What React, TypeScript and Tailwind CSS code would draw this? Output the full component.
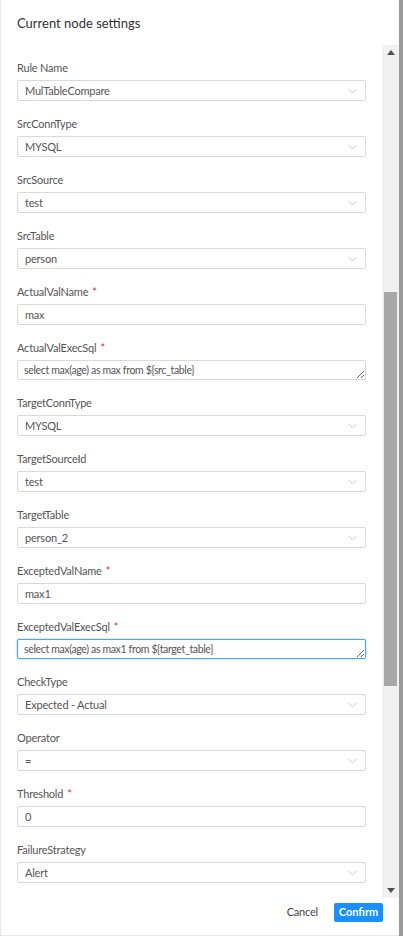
const fields = [
  { label: "Rule Name", value: "MulTableCompare", kind: "select" },
  { label: "SrcConnType", value: "MYSQL", kind: "select" },
  { label: "SrcSource", value: "test", kind: "select" },
  { label: "SrcTable", value: "person", kind: "select" },
  { label: "ActualValName", value: "max", kind: "input", required: true },
  { label: "ActualValExecSql", value: "select max(age) as max from ${src_table}", kind: "textarea", required: true },
  { label: "TargetConnType", value: "MYSQL", kind: "select" },
  { label: "TargetSourceId", value: "test", kind: "select" },
  { label: "TargetTable", value: "person_2", kind: "select" },
  { label: "ExceptedValName", value: "max1", kind: "input", required: true },
  { label: "ExceptedValExecSql", value: "select max(age) as max1 from ${target_table}", kind: "textarea", required: true, focused: true },
  { label: "CheckType", value: "Expected - Actual", kind: "select" },
  { label: "Operator", value: "=", kind: "select" },
  { label: "Threshold", value: "0", kind: "input", required: true },
  { label: "FailureStrategy", value: "Alert", kind: "select" },
];

const Chevron = () => (
  <svg width="9" height="5" viewBox="0 0 9 5" className="absolute right-[8px] top-1/2 -translate-y-1/2">
    <polyline points="0.5,0.5 4.5,4.5 8.5,0.5" fill="none" stroke="#c8c8c8" strokeWidth="1" />
  </svg>
);

const Field = ({ f }: { f: (typeof fields)[number] }) => (
  <div className="mb-[15px]">
    <div className="h-[16px] leading-[16px] text-[11px] tracking-[-0.2px] text-[#555] mb-[4px]">
      {f.label}
      {f.required && <span className="text-[#f5222d] ml-[4px]">*</span>}
    </div>
    {f.kind === "textarea" ? (
      <textarea
        readOnly
        value={f.value}
        rows={1}
        className={`block w-full h-[20px] mb-[1px] px-[6px] py-0 text-[10.5px] tracking-[-0.35px] leading-[18px] text-[#555] rounded-[2px] border resize-y overflow-hidden outline-none bg-white ${
          f.focused ? "border-[#40a9ff] shadow-[0_0_0_1px_rgba(24,144,255,0.15)]" : "border-[#d9d9d9]"
        }`}
      />
    ) : (
      <div className="relative h-[21px] border border-[#d9d9d9] rounded-[2px] pl-[7px] pt-[1px] flex items-center text-[11px] tracking-[-0.2px] text-[#555] bg-white">
        {f.value}
        {f.kind === "select" && <Chevron />}
      </div>
    )}
  </div>
);

export default function App() {
  return (
    <div className="w-[403px] h-[936px] flex bg-white overflow-hidden" style={{ fontFamily: 'Lato, "Liberation Sans", Arial, sans-serif' }}>
      <div className="w-[399px] h-full flex flex-col border-l border-b border-[#e8e8e8]">
        <div className="h-[45px] shrink-0 pl-[16px] pt-[2px] flex items-center text-[13px] text-[#333]">Current node settings</div>
        <div className="flex-1 flex min-h-0">
          <div className="flex-1 overflow-hidden pl-[16px] pr-[16px] pt-[15px]">
            {fields.map((f) => (
              <Field key={f.label} f={f} />
            ))}
          </div>
          <div className="w-[17px] shrink-0 bg-[#f1f1f1] flex flex-col">
            <div className="h-[15px] flex items-center justify-center">
              <svg width="8" height="5" viewBox="0 0 8 5"><polygon points="4,0 8,5 0,5" fill="#505050" /></svg>
            </div>
            <div className="flex-1 pl-[2px] pr-[2px]">
              <div className="mt-[232px] h-[394px] bg-[#a8a8a8]" />
            </div>
            <div className="h-[15px] flex items-center justify-center">
              <svg width="8" height="5" viewBox="0 0 8 5"><polygon points="0,0 8,0 4,5" fill="#505050" /></svg>
            </div>
          </div>
        </div>
        <div className="h-[37px] shrink-0 flex justify-end items-start pt-[5px] pr-[16px]">
          <button className="h-[19px] px-0 mr-[16px] text-[11px] tracking-[-0.2px] text-[#444]">Cancel</button>
          <button className="h-[19px] w-[49px] rounded-[2px] bg-[#1890ff] text-white text-[11px] font-bold">Confirm</button>
        </div>
      </div>
      <div className="w-[4px] h-full bg-[#9a9a9a]" />
    </div>
  );
}
